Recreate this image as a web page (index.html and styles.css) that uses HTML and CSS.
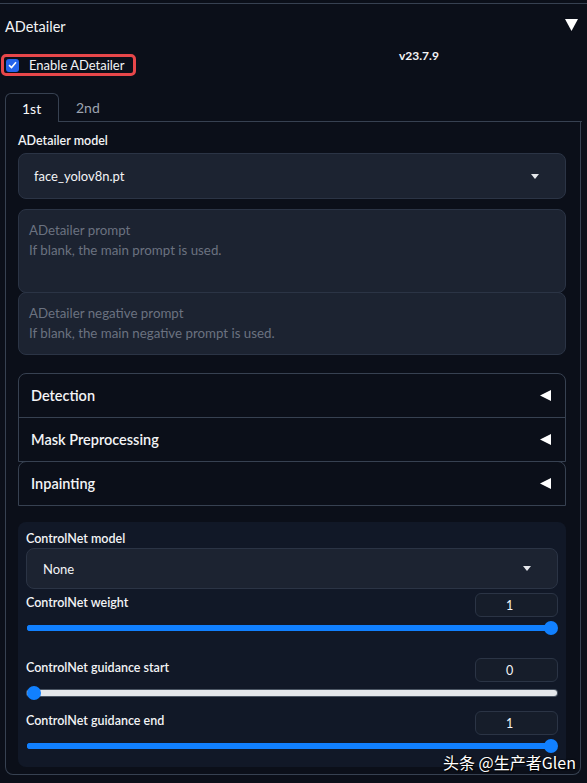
FILE: index.html
```html
<!DOCTYPE html>
<html>
<head>
<meta charset="utf-8">
<link rel="stylesheet" href="styles.css">
</head>
<body>
<div class="page">
  <div class="header">
    <span class="title">ADetailer</span>
    <svg class="caret-down" width="13" height="12" viewBox="0 0 13 12"><polygon points="0,0 13,0 6.5,12" fill="#fff"/></svg>
  </div>
  <div class="options">
    <label class="enable">
      <span class="check"><svg width="9" height="8" viewBox="0 0 9 8"><polyline points="1,4.2 3.5,6.5 8,1.2" fill="none" stroke="#fff" stroke-width="1.6"/></svg></span>
      <span>Enable ADetailer</span>
    </label>
    <span class="version">v23.7.9</span>
  </div>
  <div class="tabs">
    <span class="tab active">1st</span>
    <span class="tab">2nd</span>
  </div>
  <div class="panel">
    <div class="label">ADetailer model</div>
    <div class="dropdown big">
      <span>face_yolov8n.pt</span>
      <svg class="dd-arrow" width="8" height="5" viewBox="0 0 8 5"><polygon points="0,0 8,0 4,5" fill="#e5e7eb"/></svg>
    </div>
    <div class="prompts">
      <div class="prompt p1">
        <div>ADetailer prompt</div>
        <div>If blank, the main prompt is used.</div>
      </div>
      <div class="prompt p2">
        <div>ADetailer negative prompt</div>
        <div>If blank, the main negative prompt is used.</div>
      </div>
    </div>
    <div class="acc-group">
      <div class="acc-item">
        <span>Detection</span>
        <svg width="11" height="11" viewBox="0 0 11 11"><polygon points="11,0 11,11 0,5.5" fill="#fff"/></svg>
      </div>
      <div class="acc-item sep">
        <span>Mask Preprocessing</span>
        <svg width="11" height="11" viewBox="0 0 11 11"><polygon points="11,0 11,11 0,5.5" fill="#fff"/></svg>
      </div>
    </div>
    <div class="acc-group single">
      <div class="acc-item">
        <span>Inpainting</span>
        <svg width="11" height="11" viewBox="0 0 11 11"><polygon points="11,0 11,11 0,5.5" fill="#fff"/></svg>
      </div>
    </div>
    <div class="cn">
      <div class="label">ControlNet model</div>
      <div class="dropdown small">
        <span>None</span>
        <svg class="dd-arrow" width="8" height="5" viewBox="0 0 8 5"><polygon points="0,0 8,0 4,5" fill="#e5e7eb"/></svg>
      </div>
      <div class="slider-block s1">
        <div class="slider-head">
          <span class="label">ControlNet weight</span>
          <span class="num">1</span>
        </div>
        <div class="track"><div class="fill" style="width:100%"></div><div class="thumb" style="left:100%"></div></div>
      </div>
      <div class="slider-block s2">
        <div class="slider-head">
          <span class="label">ControlNet guidance start</span>
          <span class="num">0</span>
        </div>
        <div class="track empty"><div class="fill" style="width:0%"></div><div class="thumb" style="left:0%"></div></div>
      </div>
      <div class="slider-block s3">
        <div class="slider-head">
          <span class="label">ControlNet guidance end</span>
          <span class="num">1</span>
        </div>
        <div class="track"><div class="fill" style="width:100%"></div><div class="thumb" style="left:100%"></div></div>
      </div>
    </div>
  </div>
  <div class="watermark">头条 @生产者Glen</div>
</div>
</body>
</html>
```

FILE: styles.css
```css
html, body {
  margin: 0;
  padding: 0;
  background: #0b0f19;
}
body {
  font-family: Lato, "Noto Sans", "Noto Sans CJK SC", sans-serif;
  color: #e5e7eb;
  width: 587px;
  height: 783px;
  overflow: hidden;
}
.page {
  position: relative;
  margin-top: 3px;
  border-top: 1px solid #374151;
  padding: 0 5px;
  height: 779px;
}
.header {
  height: 44px;
  display: flex;
  align-items: center;
  justify-content: space-between;
  padding-right: 4px;
}
.title {
  font-size: 14.5px;
  color: #f3f4f6;
  padding-top: 1px;
}
.caret-down { margin-top: -3px; }
.options {
  display: flex;
  align-items: flex-start;
  height: 45px;
}
.enable {
  margin-top: 6px;
  margin-left: -4px;
  width: 127px;
  height: 16px;
  border: 3px solid #e8474a;
  border-radius: 5px;
  display: flex;
  align-items: center;
  gap: 10px;
  padding-left: 2px;
  font-size: 13px;
  color: #f3f4f6;
}
.check {
  width: 13px;
  height: 13px;
  border-radius: 3px;
  background: #2563eb;
  display: flex;
  align-items: center;
  justify-content: center;
}
.version {
  margin-left: 263px;
  font-size: 12px;
  font-weight: 700;
  color: #f3f4f6;
  margin-top: 0;
}
.tabs {
  display: flex;
  height: 28px;
  border-bottom: 1px solid #374151;
}
.tab {
  font-size: 14px;
  color: #9ca3af;
  padding: 6px 17px 0 17px;
  width: 19px;
}
.tab.active {
  width: 19px;
  color: #f9fafb;
  border: 1px solid #374151;
  border-bottom: none;
  border-radius: 6px 6px 0 0;
  background: #0b0f19;
  margin-bottom: -1px;
  padding-left: 16px;
}
.panel {
  border: 1px solid #374151;
  border-top: none;
  border-radius: 0 0 8px 8px;
  padding: 11px 14px 0 12px;
  height: 653px;
  box-sizing: border-box;
  margin-right: 1px;
}
.label {
  font-size: 12.5px;
  font-weight: 600;
  color: #f3f4f6;
  line-height: 16px;
}
.dropdown {
  display: flex;
  align-items: center;
  justify-content: space-between;
  background: #1c2331;
  border: 1px solid #2b3445;
  border-radius: 8px;
  box-sizing: border-box;
  font-size: 13px;
  color: #f3f4f6;
}
.dropdown.big {
  margin-top: 4px;
  height: 46px;
  padding: 0 26px 0 15px;
}
.dropdown.small {
  margin-top: 1px;
  height: 41px;
  padding: 0 26px 0 16px;
}
.prompts {
  margin-top: 10px;
}
.prompt {
  background: #1c2331;
  border: 1px solid #2b3445;
  border-radius: 8px;
  box-sizing: border-box;
  padding: 10px 10px 0 10px;
  font-size: 13.3px;
  color: #6b7280;
  line-height: 20px;
}
.prompt.p1 { height: 84px; }
.prompt.p2 { height: 63px; margin-top: -1px; }
.acc-group {
  margin-top: 18px;
  border: 1px solid #374151;
  border-radius: 8px 8px 0 0;
}
.acc-group.single {
  margin-top: -1px;
}
.acc-item {
  height: 43px;
  display: flex;
  align-items: center;
  justify-content: space-between;
  padding: 0 14px 0 12px;
  font-size: 14.5px;
  font-weight: 600;
  color: #f3f4f6;
}
.acc-item.sep {
  border-top: 1px solid #374151;
}
.cn {
  margin-top: 16px;
  background: #111827;
  border-radius: 8px;
  padding: 9px 8px 0 8px;
  height: 245px;
  box-sizing: border-box;
}
.slider-block.s1 { margin-top: 4px; }
.slider-block.s2 { margin-top: 27px; }
.slider-block.s3 { margin-top: 15px; }
.slider-head {
  display: flex;
  justify-content: space-between;
  align-items: flex-start;
}
.slider-head .label { padding-top: 2px; }
.num {
  width: 83px;
  height: 24px;
  box-sizing: border-box;
  border: 1px solid #2b3445;
  background: #161d2a;
  border-radius: 6px;
  font-size: 12.5px;
  color: #f3f4f6;
  display: flex;
  align-items: center;
  justify-content: center;
  padding-right: 14px;
}
.track {
  position: relative;
  margin: 8px 7px 0 1px;
  height: 6px;
  border-radius: 3px;
  background: #1180ff;
}
.track.empty {
  background: #e5e7eb;
  box-shadow: 0 0 0 1px #4b5563;
  margin-right: 1px;
}
.fill {
  height: 100%;
  background: #1180ff;
  border-radius: 3px;
}
.thumb {
  position: absolute;
  top: -4px;
  width: 14px;
  height: 14px;
  margin-left: -7px;
  border-radius: 50%;
  background: #1180ff;
}
.track.empty .thumb { margin-left: 0; }
.watermark {
  position: absolute;
  left: 443px;
  top: 746px;
  font-size: 16px;
  color: #fff;
  font-family: "Noto Sans CJK SC", "Noto Sans", sans-serif;
  text-shadow: 0 0 2px #000, 1px 1px 1px #000;
}
```
